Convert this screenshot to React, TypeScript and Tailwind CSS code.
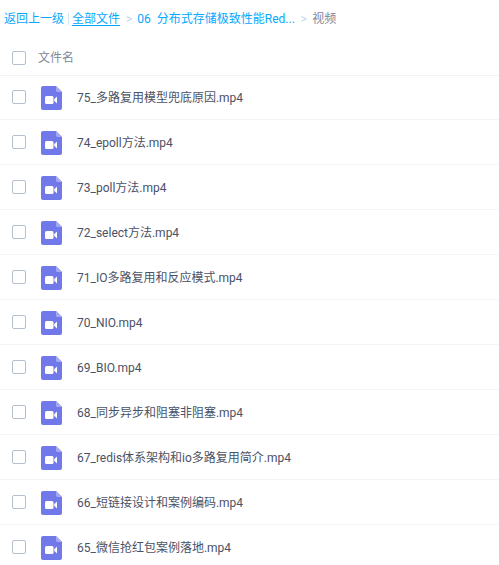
const files = [
  "75_多路复用模型兜底原因.mp4",
  "74_epoll方法.mp4",
  "73_poll方法.mp4",
  "72_select方法.mp4",
  "71_IO多路复用和反应模式.mp4",
  "70_NIO.mp4",
  "69_BIO.mp4",
  "68_同步异步和阻塞非阻塞.mp4",
  "67_redis体系架构和io多路复用简介.mp4",
  "66_短链接设计和案例编码.mp4",
  "65_微信抢红包案例落地.mp4",
];

function VideoIcon() {
  return (
    <svg width="21" height="24" viewBox="0 0 21 24" className="shrink-0">
      <path d="M2 0H15L21 6V22a2 2 0 0 1-2 2H2a2 2 0 0 1-2-2V2a2 2 0 0 1 2-2Z" fill="#7179ea" />
      <path d="M15 0L21 6H16.5A1.5 1.5 0 0 1 15 4.5Z" fill="#a3a9f2" />
      <rect x="4" y="10" width="8.5" height="8" rx="1.5" fill="#fff" />
      <path d="M13.2 13.2L16 10.6V17.4L13.2 14.8Z" fill="#fff" />
    </svg>
  );
}

function Checkbox({ className }: { className: string }) {
  return <span className={`box-border block h-[14px] w-[14px] shrink-0 rounded-[2px] border border-[#b3bfcd] bg-white ${className}`} />;
}

export default function App() {
  return (
    <div className="h-[565px] w-[499px] overflow-hidden bg-white font-['Roboto','Noto_Sans_CJK_SC',sans-serif] text-xs">
      {/* Breadcrumb */}
      <div className="flex h-[38px] items-center whitespace-nowrap pl-[4px] text-[#06a7ff]">
        <span>返回上一级</span>
        <span className="ml-[4px] mr-[3px] h-[12px] w-px bg-[#d5e6f2]" />
        <a className="text-[#06a7ff] underline decoration-[#06a7ff] underline-offset-2">全部文件</a>
        <span className="ml-[6px] mr-[5px] text-[#c4d8e8]">&gt;</span>
        <span>06</span>
        <span className="ml-[6px]">分布式存储极致性能Red...</span>
        <span className="ml-[6px] mr-[5px] text-[#c4d8e8]">&gt;</span>
        <span className="text-[#818999]">视频</span>
      </div>

      {/* Header */}
      <div className="flex h-[38px] items-center border-b border-[#f1f2f6] pl-[12px]">
        <Checkbox className="mt-[3px]" />
        <span className="relative top-px ml-[12px] text-[#818999]">文件名</span>
      </div>

      {/* File list */}
      <div className="-mt-px">
        {files.map((name) => (
          <div key={name} className="flex h-[45px] items-center border-b border-[#f1f5fa] pl-[12px] pt-[2px]">
            <Checkbox className="mb-[2px]" />
            <span className="ml-[15px] flex">
              <VideoIcon />
            </span>
            <span className="ml-[15px] text-[#4a5266]">{name}</span>
          </div>
        ))}
      </div>
    </div>
  );
}
